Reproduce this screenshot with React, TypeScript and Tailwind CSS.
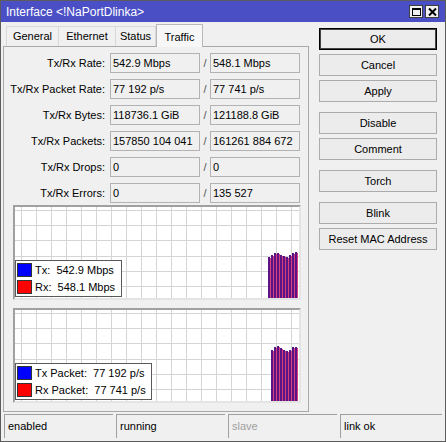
import React from "react";

const rows = [
  ["Tx/Rx Rate:", "542.9 Mbps", "548.1 Mbps"],
  ["Tx/Rx Packet Rate:", "77 192 p/s", "77 741 p/s"],
  ["Tx/Rx Bytes:", "118736.1 GiB", "121188.8 GiB"],
  ["Tx/Rx Packets:", "157850 104 041", "161261 884 672"],
  ["Tx/Rx Drops:", "0", "0"],
  ["Tx/Rx Errors:", "0", "135 527"],
];

const buttons = [
  { label: "OK", gap: false, focus: true },
  { label: "Cancel", gap: false },
  { label: "Apply", gap: false },
  { label: "Disable", gap: true },
  { label: "Comment", gap: false },
  { label: "Torch", gap: true },
  { label: "Blink", gap: true },
  { label: "Reset MAC Address", gap: false },
];

const status = [
  { text: "enabled", muted: false },
  { text: "running", muted: false },
  { text: "slave", muted: true },
  { text: "link ok", muted: false },
];

// bar tops, measured from the graph's bottom edge
const rateBars = [41, 43, 45, 45, 43, 42, 41, 43, 45, 46];
const packetBars = [51, 54, 55, 53, 51, 50, 51, 54, 54];

function Graph({ bars, legend, legendW }: { bars: number[]; legend: [string, string][]; legendW: number }) {
  const W = 284;
  const H = 91;
  const vlines = [];
  for (let x = 6; x < W; x += 15) vlines.push(x);
  const hlines = [];
  for (let y = 3; y < H; y += 15.2) hlines.push(y);
  const startX = W - 1 - bars.length * 3;
  return (
    <div className="relative w-[288px] h-[95px] bg-white border-2 border-t-[#a0a0a0] border-l-[#a0a0a0] border-r-[#e4e4e4] border-b-[#e4e4e4]">
      <svg width={W} height={H} className="block">
        {vlines.map((x) => (
          <line key={"v" + x} x1={x + 0.5} y1={0} x2={x + 0.5} y2={H} stroke="#d4d4d4" />
        ))}
        {hlines.map((y) => (
          <line key={"h" + y} x1={0} y1={Math.round(y) + 0.5} x2={W} y2={Math.round(y) + 0.5} stroke="#d4d4d4" />
        ))}
        {bars.map((h, i) => (
          <g key={i}>
            <rect x={startX + i * 3} y={H - h} width={2} height={h} fill="#5a1488" />
            <rect x={startX + i * 3 + 2} y={H - h + 1} width={1} height={h - 1} fill="#d8407a" />
          </g>
        ))}
      </svg>
      <div
        className="absolute left-[0px] bottom-[1px] bg-white border border-[#5a5a5a] px-[1px] py-[2px] flex flex-col gap-[3px]"
        style={{ width: legendW }}
      >
        {legend.map(([t, c]) => (
          <div key={t} className="flex items-center h-[14px]">
            <div className={"w-[15px] h-[14px] border border-[#333] " + c} />
            <span className="ml-[3px] text-[11px] whitespace-pre leading-none">{t}</span>
          </div>
        ))}
      </div>
    </div>
  );
}

export default function App() {
  return (
    <div
      className="w-[446px] h-[442px] bg-[#f0f0f0] border border-[#5c5c5c] flex flex-col text-black text-[11px]"
      style={{ fontFamily: '"Liberation Sans", Arial, sans-serif' }}
    >
      {/* title bar */}
      <div className="h-[21px] bg-[#4b4fc6] flex items-center pl-[5px] pr-[6px] shrink-0">
        <span className="text-white text-[12px] leading-none">Interface &lt;!NaPortDlinka&gt;</span>
        <div className="ml-auto flex gap-[2px]">
          <div className="w-[14px] h-[13px] bg-[#f0f0f0] border border-[#404040] flex items-center justify-center">
            <div className="w-[9px] h-[8px] border border-black border-t-2" />
          </div>
          <div className="w-[14px] h-[13px] bg-[#f0f0f0] border border-[#404040] flex items-center justify-center">
            <svg width="9" height="8" viewBox="0 0 9 8">
              <path d="M1 0.5 L8 7.5 M8 0.5 L1 7.5" stroke="#000" strokeWidth="2" />
            </svg>
          </div>
        </div>
      </div>

      <div className="flex h-[390px] shrink-0">
        {/* left: tabs + panel */}
        <div className="ml-[2px] w-[306px] pt-[2px] flex flex-col">
          <div className="h-[22px] flex items-end pl-[3px]">
            {["General", "Ethernet", "Status"].map((t, i) => (
              <div
                key={t}
                className={
                  "h-[20px] flex items-center justify-center bg-[#f0f0f0] border-t border-l border-[#d9d9d9] " +
                  (i === 2 ? "border-r w-[41px]" : i === 0 ? "w-[52px]" : "w-[57px]")
                }
              >
                {t}
              </div>
            ))}
            <div className="h-[23px] w-[47px] -mb-px relative z-10 flex justify-center pt-[4px] bg-[#f7f7f7] border-t border-l border-r border-[#b8b8b8]">
              Traffic
            </div>
          </div>
          <div className="h-[366px] border border-[#a9a9a9] pt-[6px] pl-[1px]">
            <div className="flex flex-col gap-[6px]">
              {rows.map(([label, a, b]) => (
                <div key={label} className="flex items-center h-[20px]">
                  <div className="w-[100px] text-right">{label}</div>
                  <div className="ml-[5px] w-[90px] h-[20px] border border-[#b2b2b2] flex items-center pl-[2px] whitespace-nowrap">
                    {a}
                  </div>
                  <div className="w-[10px] text-center text-[#555]">/</div>
                  <div className="w-[90px] h-[20px] border border-[#b2b2b2] flex items-center pl-[2px] whitespace-nowrap">
                    {b}
                  </div>
                </div>
              ))}
            </div>
            <div className="ml-[8px] mt-[2px]">
              <Graph
                bars={rateBars}
                legendW={107}
                legend={[
                  ["Tx:  542.9 Mbps", "bg-[#0000ff]"],
                  ["Rx:  548.1 Mbps", "bg-[#ff0000]"],
                ]}
              />
            </div>
            <div className="ml-[8px] mt-[8px]">
              <Graph
                bars={packetBars}
                legendW={137}
                legend={[
                  ["Tx Packet:  77 192 p/s", "bg-[#0000ff]"],
                  ["Rx Packet:  77 741 p/s", "bg-[#ff0000]"],
                ]}
              />
            </div>
          </div>
        </div>

        {/* right: buttons */}
        <div className="ml-[10px] w-[118px] pt-[6px] flex flex-col">
          {buttons.map((b, i) => (
            <div
              key={b.label}
              className={
                "h-[22px] flex items-center justify-center text-[11px] bg-[#ececec] " +
                (b.focus ? "border border-black shadow-[inset_0_0_0_1px_#444] " : "border border-[#acacac] ") +
                (i === 0 ? "" : b.gap ? "mt-[10px]" : "mt-[4px]")
              }
            >
              {b.label}
            </div>
          ))}
        </div>
      </div>

      {/* status bar */}
      <div className="flex gap-[3px] pt-[2px] pl-[3px] pr-[3px]">
        {status.map((s, i) => (
          <div
            key={s.text}
            className={
              "h-[24px] border-t border-l border-[#a0a0a0] flex items-center pl-[3px] " +
              (i === 3 ? "flex-1" : "w-[109px]") +
              (s.muted ? " text-[#a0a0a0]" : "")
            }
          >
            {s.text}
          </div>
        ))}
      </div>
    </div>
  );
}
